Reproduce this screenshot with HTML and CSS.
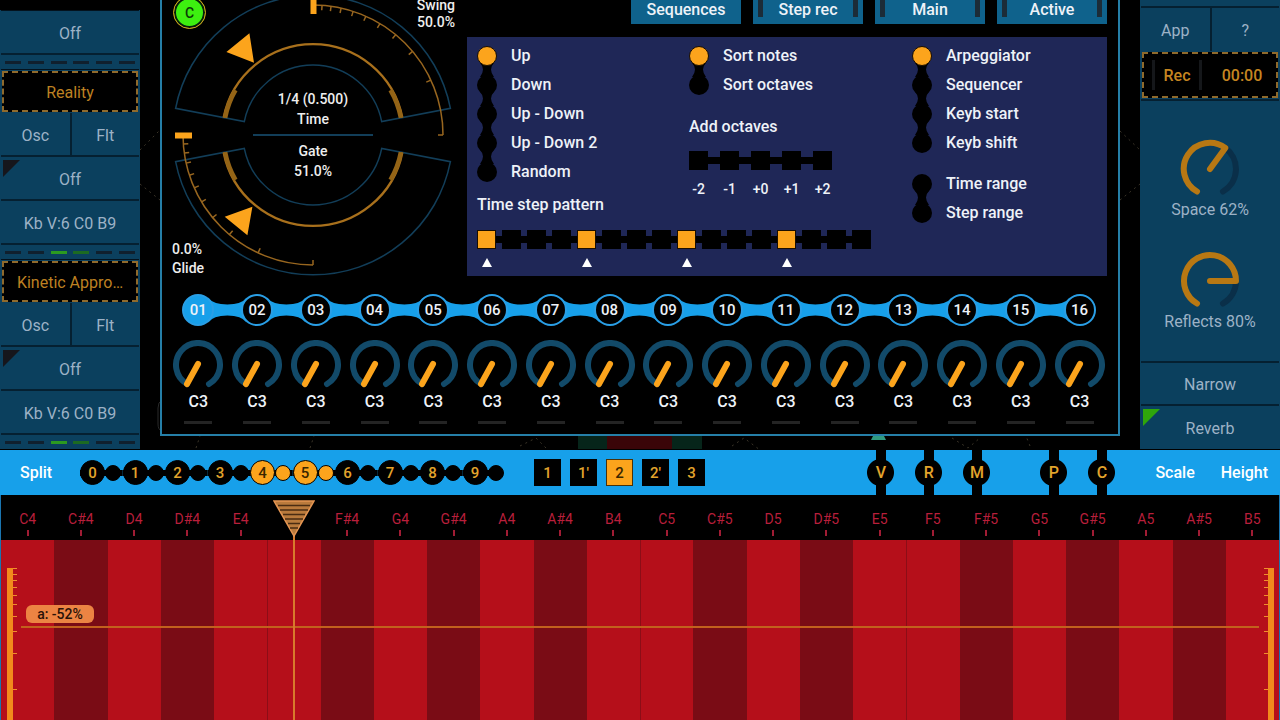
FILE: index.html
```html
<!DOCTYPE html>
<html lang="en">
<head>
    <meta charset="UTF-8">
    <meta name="viewport" content="width=device-width, initial-scale=1.0">
    <title>Arpeggiator</title>
    <link rel="stylesheet" href="styles.css">
</head>
<body>
    <div class="top">
        <aside class="side">
            <div class="module">
                <button class="row">Off</button>
                <div class="leds"><i></i><i></i><i></i><i></i><i></i><i></i></div>
            </div>
            <div class="module">
                <button class="title">Reality</button>
                <div class="pair"><button class="row">Osc</button><button class="row">Flt</button></div>
                <button class="row corner">Off</button>
                <button class="row">Kb V:6 C0 B9</button>
                <div class="leds"><i></i><i></i><i class="on"></i><i class="dim"></i><i></i><i></i></div>
            </div>
            <div class="module">
                <button class="title">Kinetic Appro…</button>
                <div class="pair"><button class="row">Osc</button><button class="row">Flt</button></div>
                <button class="row corner">Off</button>
                <button class="row">Kb V:6 C0 B9</button>
                <div class="leds"><i></i><i></i><i class="on"></i><i class="dim"></i><i></i><i></i></div>
            </div>
        </aside>

        <main class="stage">
            <svg class="backdrop" viewBox="0 0 1000 450" preserveAspectRatio="none">
                <g fill="none" stroke="#3a3428" stroke-dasharray="2 4">
                    <path d="M0 150L20 130M0 184L20 200M980 131L1000 150M980 200L1000 184"/>
                    <path d="M56 448L60 436M170 448L174 436M380 446L396 438L408 450M592 446L604 438L620 450M812 438L828 448L840 438M890 446L886 436"/>
                </g>
                <path fill="none" stroke="#2a2a2a" d="M22 400Q18 402 18 408V424Q18 430 22 431"/>
                <path fill="#06251a" d="M438 436H562V449H438Z"/>
                <path fill="#3a0508" d="M467 436H532V449H467Z"/>
                <path fill="#2f9a80" d="M733 436H744L746 440H731Z"/>
            </svg>
            <section class="arp">
                <div class="upper">
                    <div class="dial">
                        <svg viewBox="-146 -135 290 276" width="290" height="276">
                            <g fill="none" stroke="#123e59" stroke-width="1.5">
                                <path d="M-137.4-26.7A140 140 0 0 1 137.4-26.7L68.7-13.4A70 70 0 0 0-68.7-13.4Z"/>
                                <path d="M-137.4 26.7A140 140 0 0 0 137.4 26.7L68.7 13.4A70 70 0 0 1-68.7 13.4Z"/>
                                <path d="M-60 0H60" stroke-width="2"/>
                            </g>
                            <g fill="none" stroke="#a8701c" stroke-width="2.4">
                                <path d="M-89.3-17.4A91 91 0 0 1 89.3-17.4M-89.3 17.4A91 91 0 0 0 89.3 17.4"/>
                                <path stroke="#946416" stroke-width="4.5" d="M-87.9-17.1A89.5 89.5 0 0 1-77.5-44.8M87.9-17.1A89.5 89.5 0 0 0 77.5-44.8M-87.9 17.1A89.5 89.5 0 0 0-77.5 44.8M87.9 17.1A89.5 89.5 0 0 1 77.5 44.8"/>
                            </g>
                            <g id="scale">
                                <g id="scaleTicks" fill="none" stroke="#98661f" stroke-width="1.5">
                                    <path d="M0-130A130 130 0 0 1 130 0"/>
                                </g>
                                <path fill="#fca41c" d="M-2.5-138h6v17h-6z"/>
                            </g>
                            <use href="#scale" transform="matrix(0 1 1 0 0 0)"/>
                            <path fill="#fca41c" d="M-63.6-101.7L-86.6-83L-59-72.3ZM-88.3 81.7L-60.6 71.7L-65.6 100.3Z"/>
                            <g class="dial-text" text-anchor="middle">
                                <text y="-31">1/4 (0.500)</text>
                                <text y="-11">Time</text>
                                <text y="21">Gate</text>
                                <text y="41">51.0%</text>
                            </g>
                            <g class="dial-text" text-anchor="end">
                                <text x="142" y="-125">Swing</text>
                                <text x="142" y="-108">50.0%</text>
                            </g>
                            <g class="dial-text">
                                <text x="-141" y="119">0.0%</text>
                                <text x="-141" y="138">Glide</text>
                            </g>
                        </svg>
                        <button class="copy">C</button>
                    </div>

                    <div class="config">
                        <nav class="tabs">
                            <button class="tab">Sequences</button>
                            <button class="tab bars">Step rec</button>
                            <button class="tab bars">Main</button>
                            <button class="tab bars">Active</button>
                        </nav>
                        <div class="options">
                            <div class="options-left">
                                <div class="options-top">
                                    <div class="chain">
                                        <label><input type="radio" name="dir" checked>Up</label>
                                        <label><input type="radio" name="dir">Down</label>
                                        <label><input type="radio" name="dir">Up - Down</label>
                                        <label><input type="radio" name="dir">Up - Down 2</label>
                                        <label><input type="radio" name="dir">Random</label>
                                    </div>
                                    <div>
                                        <div class="chain">
                                            <label><input type="radio" name="sort" checked>Sort notes</label>
                                            <label><input type="radio" name="sort">Sort octaves</label>
                                        </div>
                                        <h2 class="octaves-title">Add octaves</h2>
                                        <div class="octaves">
                                            <label><input type="checkbox">-2</label>
                                            <label><input type="checkbox">-1</label>
                                            <label><input type="checkbox">+0</label>
                                            <label><input type="checkbox">+1</label>
                                            <label><input type="checkbox">+2</label>
                                        </div>
                                    </div>
                                </div>
                                <h2 class="pattern-title">Time step pattern</h2>
                                <div class="pattern" id="pattern"></div>
                            </div>
                            <div class="options-right">
                                <div class="chain">
                                    <label><input type="radio" name="mode" checked>Arpeggiator</label>
                                    <label><input type="radio" name="mode">Sequencer</label>
                                    <label><input type="radio" name="mode">Keyb start</label>
                                    <label><input type="radio" name="mode">Keyb shift</label>
                                </div>
                                <div class="chain">
                                    <label><input type="checkbox">Time range</label>
                                    <label><input type="checkbox">Step range</label>
                                </div>
                            </div>
                        </div>
                    </div>
                </div>
                <div class="steps" id="steps"></div>
            </section>
        </main>

        <aside class="side side-right">
            <button class="row">&nbsp;</button>
            <div class="pair"><button class="row">App</button><button class="row">?</button></div>
            <div class="rec"><button class="rec-btn">Rec</button><span>00:00</span></div>
            <div class="fx">
                <label class="fx-knob">
                    <svg viewBox="-30 -30 60 56" width="60" height="56" fill="none" stroke-width="6" stroke-linecap="round" stroke-linejoin="round">
                        <path stroke="#0a2f49" d="M15.3-21A26 26 0 0 1 13 22.5"/>
                        <path stroke="#b87813" d="M-13 22.5A26 26 0 1 1 15.3-21L0 0"/>
                    </svg>
                    <input type="range" value="62">
                    Space 62%
                </label>
                <label class="fx-knob">
                    <svg viewBox="-30 -30 60 56" width="60" height="56" fill="none" stroke-width="6" stroke-linecap="round" stroke-linejoin="round">
                        <path stroke="#0a2f49" d="M26 0A26 26 0 0 1 13 22.5"/>
                        <path stroke="#b87813" d="M-13 22.5A26 26 0 1 1 26 0H0"/>
                    </svg>
                    <input type="range" value="80">
                    Reflects 80%
                </label>
            </div>
            <button class="row">Narrow</button>
            <button class="row corner active">Reverb</button>
        </aside>
    </div>

    <div class="split">
        <button class="link">Split</button>
        <div class="octs" id="octs"></div>
        <div class="layouts">
            <button>1</button>
            <button>1'</button>
            <button class="on">2</button>
            <button>2'</button>
            <button>3</button>
        </div>
        <div class="pins">
            <button>V</button>
            <button>R</button>
            <button>M</button>
        </div>
        <div class="pins">
            <button>P</button>
            <button>C</button>
        </div>
        <button class="link scale-link">Scale</button>
        <button class="link">Height</button>
    </div>

    <div class="keyboard">
        <div class="keys" id="keys"></div>
        <div class="ruler" id="rulerLeft"></div>
        <div class="ruler ruler-right" id="rulerRight"></div>
        <div class="level"><span>a: -52%</span></div>
    </div>
    <script src="script.js"></script>
</body>
</html>
```
FILE: styles.css
```css
* {
    box-sizing: border-box;
}
body {
    margin: 0;
    background: #000;
    color: #eef2f8;
    font-family: Roboto, "Liberation Sans", sans-serif;
    font-size: 16px;
    font-weight: 500;
    display: flex;
    flex-direction: column;
    height: 100vh;
    overflow: hidden;
}
button {
    font: inherit;
    color: inherit;
    background: none;
    border: 0;
    padding: 0;
    cursor: pointer;
}
h2 {
    margin: 0;
    font-size: 16px;
    font-weight: 500;
}
input {
    appearance: none;
    margin: 0;
}

/* the upper half hangs from its bottom edge */
.top {
    display: flex;
    align-items: flex-end;
    height: 450px;
    flex-shrink: 0;
    overflow: hidden;
}

/* side columns */
.side {
    width: 140px;
    flex-shrink: 0;
    padding: 0 1px;
    margin-bottom: 1px;
    background: #0b405e;
    color: #9db2c6;
    font-weight: 400;
}
.module {
    border-top: 1px solid #03121d;
}
.row {
    display: block;
    width: 100%;
    height: 44px;
    padding-top: 2px;
    border-bottom: 2px solid #052031;
}
.pair {
    display: flex;
}
.pair .row + .row {
    border-left: 2px solid #052031;
}
.title {
    display: block;
    width: 136px;
    height: 41px;
    margin: 1px;
    padding-top: 2px;
    background: #000;
    border: 2px dashed #8f6a2c;
    color: #bd8122;
}
.leds {
    display: flex;
    justify-content: space-between;
    align-items: center;
    height: 14px;
    padding: 0 4px;
}
.leds i {
    width: 16px;
    height: 3px;
    background: #10202e;
}
.leds .on {
    background: #2c9a20;
}
.leds .dim {
    background: #1c6a22;
}
.corner {
    position: relative;
}
.corner::before {
    content: "";
    position: absolute;
    left: 2px;
    top: 3px;
    border-top: 17px solid #16161c;
    border-right: 17px solid transparent;
}
.corner.active::before {
    border-top-color: #2fa60b;
}
.side-right .row {
    height: 43px;
}
.side-right > .row:last-child {
    border-bottom: 0;
}
.side-right .pair .row {
    border-bottom: 0;
}
.rec {
    display: flex;
    align-items: center;
    height: 46px;
    margin: 1px;
    padding: 0 8px;
    background: #000;
    border: 2px dashed #8f6a2c;
    color: #c58620;
    font-weight: 500;
}
.rec-btn {
    width: 50px;
    height: 30px;
    border: solid #15171a;
    border-width: 0 3px;
}
.rec span {
    flex: 1;
    padding-left: 14px;
    text-align: center;
}
.fx {
    display: flex;
    flex-direction: column;
    align-items: center;
    height: 264px;
    padding-top: 38px;
    gap: 31px;
    border-top: 2px solid #052031;
    border-bottom: 2px solid #052031;
}
.fx-knob {
    display: flex;
    flex-direction: column;
    align-items: center;
    position: relative;
    line-height: 20px;
}
.fx-knob svg {
    margin-bottom: 5px;
}
.fx-knob input,
.step input {
    position: absolute;
    inset: 0 0 auto;
    width: 100%;
    height: 48px;
    opacity: 0;
}

/* arpeggiator window */
.stage {
    flex: 1;
    padding: 0 20px 14px;
    position: relative;
}
.backdrop {
    position: absolute;
    left: 0;
    bottom: 0;
    width: 100%;
    height: 450px;
}
.arp {
    position: relative;
    background: #000;
    border: 2px solid #257fa8;
    border-top: 0;
    padding: 0 9px 10px 7px;
}
.upper {
    display: flex;
    align-items: flex-end;
    height: 276px;
}
.dial {
    position: relative;
    margin: 0 10px 0 -2px;
    height: 276px;
}
.dial svg {
    overflow: visible;
}
.dial-text {
    fill: #eee;
    font-size: 14px;
}
.copy {
    position: absolute;
    left: 6px;
    top: -4px;
    width: 33px;
    height: 33px;
    border: 1px solid #e09a20;
    border-radius: 50%;
    background: #3df010;
    box-shadow: inset 0 0 0 2px #06200a;
    color: #0a3a06;
    font-size: 14px;
}
.config {
    flex: 1;
    margin-right: 2px;
}
.tabs {
    display: flex;
    justify-content: flex-end;
    gap: 12px;
    margin-bottom: 13px;
}
.tab {
    position: relative;
    width: 110px;
    height: 30px;
    background: #0f628c;
}
.bars::before,
.bars::after {
    content: "";
    position: absolute;
    top: 0;
    left: 5px;
    width: 5px;
    height: 23px;
    background: #1c2c38;
}
.bars::after {
    left: auto;
    right: 5px;
}
.options {
    display: flex;
    height: 239px;
    padding: 4px 10px;
    background: #1f2757;
}
.options-left {
    width: 435px;
}
.options-top {
    display: flex;
    height: 145px;
}
.options-top > .chain {
    width: 212px;
}
.chain label {
    display: flex;
    align-items: center;
    gap: 14px;
    position: relative;
    height: 29px;
}
.chain input {
    width: 20px;
    height: 20px;
    border-radius: 50%;
    background: #000;
    position: relative;
    z-index: 1;
}
.chain input:checked {
    background: #fca41c;
    border: 1px solid #1a0e00;
}
.chain label + label::before {
    content: "";
    position: absolute;
    left: 0;
    top: -15px;
    width: 20px;
    height: 29px;
    background: #000;
    clip-path: path("M3 8Q6 11 6 14.5Q6 18 3 22H17Q14 18 14 14.5Q14 11 17 8Z");
}
.chain + .chain {
    margin-top: 12px;
}
.octaves-title {
    margin-top: 16px;
    line-height: 24px;
}
.octaves {
    display: flex;
    gap: 12px;
    margin-top: 12px;
    background: linear-gradient(#000, #000) 6px 6px / 130px 7px no-repeat;
}
.octaves label {
    display: flex;
    flex-direction: column;
    align-items: center;
    width: 19px;
    gap: 10px;
    font-size: 14px;
    line-height: 18px;
}
.octaves input,
.pattern input {
    width: 19px;
    height: 19px;
    background: #000;
    flex-shrink: 0;
}
.pattern-title {
    margin-top: 7px;
    line-height: 24px;
}
.pattern {
    display: flex;
    gap: 6px;
    margin-top: 13px;
    background: linear-gradient(#000, #000) 6px 6px / 380px 7px no-repeat;
}
.pattern label {
    display: flex;
    flex-direction: column;
}
.pattern input:checked {
    background: #fca41c;
    border: 1px solid #1a0e00;
}
.pattern .beat::after {
    content: "";
    width: 0;
    margin: 9px 4px 0 5px;
    border: solid transparent;
    border-width: 0 5px 9px;
    border-bottom-color: #fff;
}

/* sixteen steps */
.steps {
    display: grid;
    grid-template-columns: repeat(16, 1fr);
    margin-top: 18px;
}
.step {
    display: flex;
    flex-direction: column;
    align-items: center;
    position: relative;
}
.step-num {
    position: relative;
    width: 32px;
    height: 32px;
    border: 2px solid #2a9fe6;
    border-radius: 50%;
    background: #000;
    font-size: 15px;
}
.step-num.on {
    background: #17a0ea;
}
.bridge {
    position: absolute;
    left: 50%;
    top: 0;
    width: 100%;
    height: 32px;
}
.step label {
    display: flex;
    flex-direction: column;
    align-items: center;
    position: relative;
    margin-top: 14px;
    line-height: 20px;
}
.step label svg {
    margin-bottom: 4px;
}
.step::after {
    content: "";
    width: 28px;
    height: 3px;
    margin-top: 9px;
    background: #242424;
}

/* split bar */
.split {
    display: flex;
    align-items: center;
    height: 45px;
    flex-shrink: 0;
    padding: 0 12px 0 20px;
    background: #17a0ea;
}
.link {
    font-size: 16px;
    color: #fff;
}
.split > .link:first-child {
    width: 60px;
    text-align: left;
}
.octs {
    display: grid;
    grid-template-columns: repeat(10, 1fr);
    width: 425px;
}
.oct {
    display: flex;
    align-items: center;
    background: linear-gradient(#000, #000) center / 100% 6px no-repeat;
}
.oct:last-child {
    background-size: 80% 6px;
    background-position: left;
}
.oct button {
    width: 25px;
    height: 25px;
    border: 1px solid #000;
    border-radius: 50%;
    background: #000;
    color: #e3a42c;
    font-size: 15px;
}
.oct .half {
    width: 16px;
    height: 16px;
}
.oct.on button {
    background: #fca41c;
    color: #3a2600;
}
.layouts {
    display: flex;
    gap: 9px;
    margin: 0 auto 0 29px;
}
.layouts button {
    width: 27px;
    height: 27px;
    background: #000;
    color: #e3a42c;
    font-size: 15px;
}
.layouts .on {
    background: #fca41c;
    border: 1px solid #4a3208;
    color: #3a2600;
}
.pins {
    display: flex;
    gap: 21px;
    align-self: stretch;
    margin-right: 50px;
}
.pins + .pins {
    margin-right: 40px;
}
.pins button {
    width: 27px;
    color: #e3a42c;
    background:
        radial-gradient(circle, #000 13px, transparent 14px),
        linear-gradient(#000, #000) center / 10px 100% no-repeat;
}
.scale-link {
    margin-right: 26px;
}

/* keyboard */
.keyboard {
    position: relative;
    flex: 1;
    border: solid #1a75b0;
    border-width: 0 1px;
}
.keys {
    display: grid;
    grid-template-columns: repeat(24, 1fr);
    height: 100%;
}
.key {
    position: relative;
    display: flex;
    flex-direction: column;
    color: #b81f3b;
    font-size: 14px;
    font-weight: 400;
    text-align: center;
}
.key span {
    height: 45px;
    padding-top: 14px;
    line-height: 20px;
    background: linear-gradient(#a01c34, #a01c34) center 35px / 2px 6px no-repeat;
}
.key::after {
    content: "";
    flex: 1;
    background: #b50f1a;
}
.key.sharp::after {
    background: #7a0c15;
}
.key.joined::after {
    border-left: 1px solid #8c0d17;
}
.cursor {
    position: absolute;
    left: 50%;
    top: 5px;
    width: 42px;
    height: calc(100% - 5px);
    margin-left: -21px;
    background: linear-gradient(#d87a2c, #d87a2c) center 36px / 2px 100% no-repeat;
    z-index: 1;
}
.ruler {
    position: absolute;
    left: 6px;
    top: 73px;
    bottom: 0;
    width: 10px;
    border-left: 6px solid #f28a1c;
}
.ruler-right {
    left: auto;
    right: 5px;
    transform: scaleX(-1);
}
.ruler i {
    position: absolute;
    left: 0;
    width: 4px;
    height: 1px;
    background: #f0902c;
}
.level {
    position: absolute;
    left: 20px;
    right: 20px;
    top: 110px;
    border-bottom: 2px solid #c2611d;
    padding: 0 5px 3px;
}
.level span {
    display: block;
    width: 68px;
    border-radius: 6px;
    background: #ec8443;
    color: #2a1208;
    font-size: 14px;
    line-height: 18px;
    text-align: center;
}
```
FILE: script.js
```js
// scale ticks around the dial
const svgNS = 'http://www.w3.org/2000/svg';
[4, 8, 12.5, 18, 24, 31, 39.5, 50, 65, 90].forEach(angle => {
    const tick = document.createElementNS(svgNS, 'path');
    tick.setAttribute('d', 'M0-130v5');
    tick.setAttribute('transform', `rotate(${angle})`);
    document.getElementById('scaleTicks').appendChild(tick);
});

// time step pattern
const pattern = document.getElementById('pattern');
for (let i = 0; i < 16; i++) {
    const beat = i % 4 === 0;
    pattern.innerHTML += `<label class="${beat ? 'beat' : ''}"><input type="checkbox" aria-label="Pattern ${i + 1}" ${beat ? 'checked' : ''}></label>`;
}

// steps
const steps = document.getElementById('steps');
for (let i = 1; i <= 16; i++) {
    const num = String(i).padStart(2, '0');
    const bridge = i < 16 ? `<svg class="bridge" viewBox="0 0 58 32" preserveAspectRatio="none"><path fill="#17a0ea" d="M10 3.5Q15 10.5 29 10.5Q43 10.5 48 3.5V28.5Q43 21.5 29 21.5Q15 21.5 10 28.5Z"/></svg>` : '';
    steps.innerHTML += `
        <div class="step">
            ${bridge}
            <button class="step-num ${i === 1 ? 'on' : ''}">${num}</button>
            <label>
                <svg viewBox="-26 -25 52 48" width="52" height="48" fill="none" stroke-width="6" stroke-linecap="round">
                    <path stroke="#124a69" d="M-11 19A22 22 0 1 1 11 19"/>
                    <path stroke="#fca41c" d="M0-1L-11 19"/>
                </svg>
                <input type="range" value="0">
                C3
            </label>
        </div>`;
}

// octave split
const octs = document.getElementById('octs');
for (let i = 0; i < 10; i++) {
    const on = i === 4 || i === 5;
    octs.innerHTML += `<div class="oct ${on ? 'on' : ''}"><button>${i}</button><button class="half" aria-label="${i} half"></button></div>`;
}

// keys
const notes = ['C', 'C#', 'D', 'D#', 'E', 'F', 'F#', 'G', 'G#', 'A', 'A#', 'B'];
const keys = document.getElementById('keys');
for (let i = 0; i < 24; i++) {
    const note = notes[i % 12];
    const octave = 4 + Math.floor(i / 12);
    let cls = 'key';
    if (note.includes('#')) cls += ' sharp';
    if (i > 0 && (note === 'F' || note === 'C')) cls += ' joined';
    const current = note === 'F' && octave === 4;
    keys.innerHTML += `<div class="${cls}"><span>${current ? '' : note + octave}</span>${current ? `
        <div class="cursor">
            <svg viewBox="0 0 42 37" width="42" height="37">
                <path fill="#b97a3c" stroke="#e59552" stroke-width="1.5" d="M1 1H41L21 36Z"/>
                <path stroke="#4a2c12" stroke-width="1.5" d="M5 5.500H37M7 10H35M10 14.500H32M12 19H30M15 23.500H27M17 28H25"/>
            </svg>
        </div>` : ''}</div>`;
}

// ruler marks
['rulerLeft', 'rulerRight'].forEach(id => {
    const ruler = document.getElementById(id);
    [0, 6, 12, 19, 27, 36, 48, 63, 85, 121].forEach(y => {
        ruler.innerHTML += `<i style="top: ${y}px"></i>`;
    });
});
```
